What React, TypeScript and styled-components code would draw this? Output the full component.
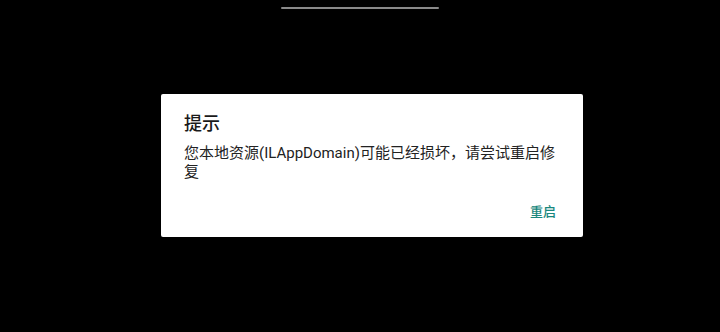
import React from 'react'
import styled, { createGlobalStyle } from 'styled-components'

const GlobalStyle = createGlobalStyle`
  html, body {
    margin: 0;
    padding: 0;
    background: #000;
  }
  body {
    font-family: Roboto, "Noto Sans CJK SC", sans-serif;
  }
`

const Screen = styled.div`
  width: 720px;
  height: 332px;
  background: #000;
  display: flex;
  flex-direction: column;
  align-items: center;
  overflow: hidden;
`

const StatusHandle = styled.div`
  width: 158px;
  height: 2px;
  margin-top: 7px;
  border-radius: 1px;
  background: #8a8a8a;
`

const Dialog = styled.div`
  box-sizing: border-box;
  width: 422px;
  margin-top: 85px;
  margin-left: 24px;
  padding: 18px 22px 16px 23px;
  background: #fff;
  border-radius: 2px;
  display: flex;
  flex-direction: column;
`

const Title = styled.div`
  font-size: 18px;
  line-height: 24px;
  font-weight: 500;
  color: #1a1a1a;
`

const Message = styled.div`
  margin-top: 8px;
  font-size: 15px;
  line-height: 19px;
  color: #222;
`

const Actions = styled.div`
  display: flex;
  justify-content: flex-end;
  margin-top: 21px;
`

const ActionButton = styled.button`
  border: none;
  background: none;
  padding: 0 5px 0 0;
  font-family: inherit;
  font-size: 13px;
  line-height: 18px;
  font-weight: 500;
  color: #19877d;
  cursor: pointer;
`

export default function App() {
  return (
    <>
      <GlobalStyle />
      <Screen>
        <StatusHandle />
        <Dialog>
          <Title>提示</Title>
          <Message>您本地资源(ILAppDomain)可能已经损坏，请尝试重启修复</Message>
          <Actions>
            <ActionButton>重启</ActionButton>
          </Actions>
        </Dialog>
      </Screen>
    </>
  )
}
